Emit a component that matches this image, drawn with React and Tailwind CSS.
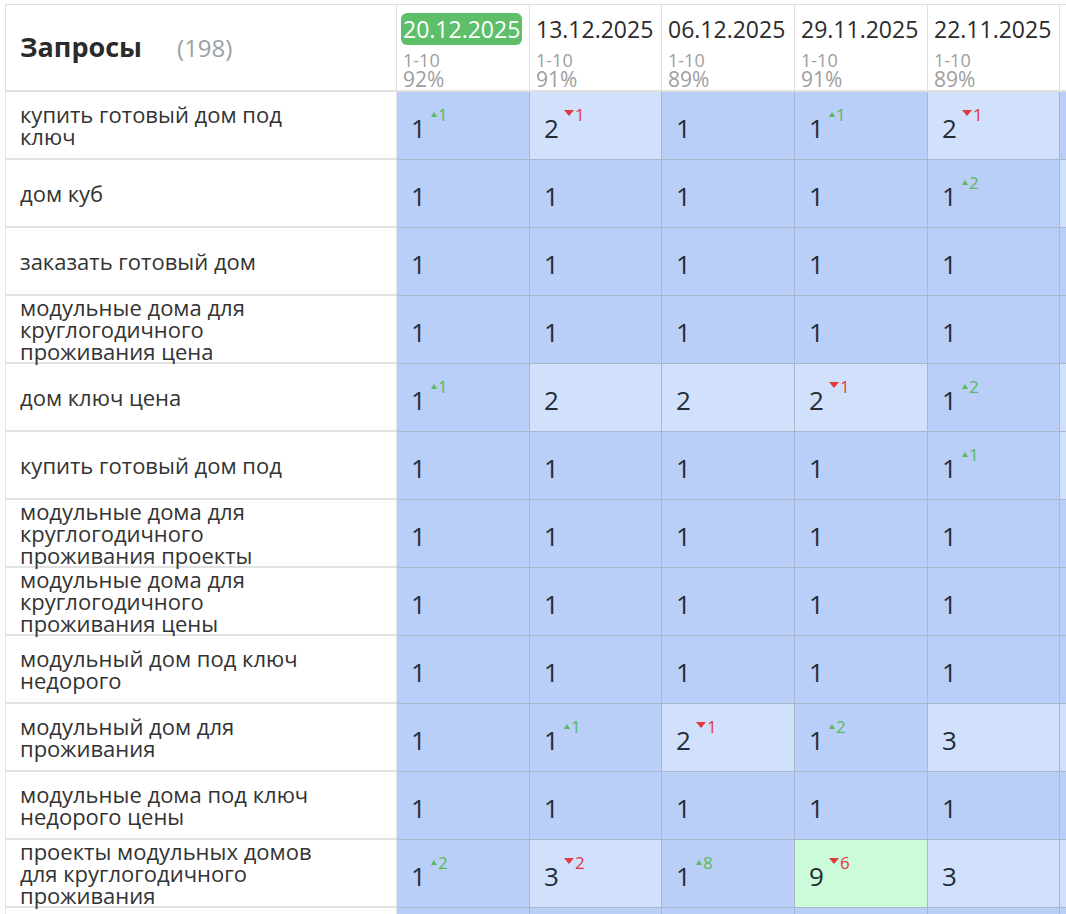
import React from "react";

const dates = [
  { d: "20.12.2025", r: "1-10", p: "92%", active: true },
  { d: "13.12.2025", r: "1-10", p: "91%" },
  { d: "06.12.2025", r: "1-10", p: "89%" },
  { d: "29.11.2025", r: "1-10", p: "91%" },
  { d: "22.11.2025", r: "1-10", p: "89%" },
];

const colW = ["w-[133px]", "w-[132px]", "w-[133px]", "w-[133px]", "w-[132px]", "w-[133px]"];

// [value, bg: d=dark, l=light, g=green, change]; x is the cut-off column's colour
const rows = [
  { q: "купить готовый дом под ключ", c: [["1", "d", 1], ["2", "l", -1], ["1", "d"], ["1", "d", 1], ["2", "l", -1]], x: "d" },
  { q: "дом куб", c: [["1", "d"], ["1", "d"], ["1", "d"], ["1", "d"], ["1", "d", 2]], x: "l" },
  { q: "заказать готовый дом", c: [["1", "d"], ["1", "d"], ["1", "d"], ["1", "d"], ["1", "d"]], x: "d" },
  { q: "модульные дома для круглогодичного проживания цена", c: [["1", "d"], ["1", "d"], ["1", "d"], ["1", "d"], ["1", "d"]], x: "d" },
  { q: "дом ключ цена", c: [["1", "d", 1], ["2", "l"], ["2", "l"], ["2", "l", -1], ["1", "d", 2]], x: "l" },
  { q: "купить готовый дом под", c: [["1", "d"], ["1", "d"], ["1", "d"], ["1", "d"], ["1", "d", 1]], x: "l" },
  { q: "модульные дома для круглогодичного проживания проекты", c: [["1", "d"], ["1", "d"], ["1", "d"], ["1", "d"], ["1", "d"]], x: "d" },
  { q: "модульные дома для круглогодичного проживания цены", c: [["1", "d"], ["1", "d"], ["1", "d"], ["1", "d"], ["1", "d"]], x: "d" },
  { q: "модульный дом под ключ недорого", c: [["1", "d"], ["1", "d"], ["1", "d"], ["1", "d"], ["1", "d"]], x: "d" },
  { q: "модульный дом для проживания", c: [["1", "d"], ["1", "d", 1], ["2", "l", -1], ["1", "d", 2], ["3", "l"]], x: "l" },
  { q: "модульные дома под ключ недорого цены", c: [["1", "d"], ["1", "d"], ["1", "d"], ["1", "d"], ["1", "d"]], x: "d" },
  { q: "проекты модульных домов для круглогодичного проживания", c: [["1", "d", 2], ["3", "l", -2], ["1", "d", 8], ["9", "g", -6], ["3", "l"]], x: "l" },
];

const bgMap = { d: "bg-[#b9cff8]", l: "bg-[#d2e1fb]", g: "bg-[#ccfbda]" };

function Change({ v }) {
  if (!v) return null;
  const up = v > 0;
  return (
    <span
      className={`ml-[5px] mt-[-5px] flex items-center text-[17px] leading-none ${
        up ? "text-[#5cb85c]" : "text-[#e0393e]"
      }`}
    >
      {up ? (
        <svg width="6" height="5" viewBox="0 0 6 5" className="mr-[1px] mt-[1px]">
          <polygon points="3,0 6,5 0,5" fill="currentColor" />
        </svg>
      ) : (
        <svg width="10" height="6" viewBox="0 0 10 6" className="mr-[1px] mt-[-2px]">
          <polygon points="0,0 10,0 5,6" fill="currentColor" />
        </svg>
      )}
      <span>{Math.abs(v)}</span>
    </span>
  );
}

export default function App() {
  return (
    <div
      className="w-[1066px] h-[914px] overflow-hidden bg-white pt-[4px] pl-[5px]"
      style={{ fontFamily: "'Open Sans', 'Noto Sans', sans-serif" }}
    >
      <div className="w-[1200px]">
        {/* header */}
        <div className="flex border-t border-[#e0e0e0]">
          <div className="w-[392px] h-[87px] shrink-0 border-l border-r border-b-2 border-[#e0e0e0] flex items-center pl-[14px]">
            <span className="text-[27px] font-bold text-[#2b2b2b]">Запросы</span>
            <span className="ml-[35px] text-[24px] text-[#9aa0a6]">(198)</span>
          </div>
          {dates.map((d, i) => (
            <div
              key={i}
              className={`${colW[i]} h-[87px] shrink-0 border-r border-b-2 border-[#e0e0e0] pl-[4px] pt-[8px]`}
            >
              <div className="h-[32px] flex items-center">
                <span
                  className={`text-[23px] leading-[32px] ${
                    d.active ? "bg-[#5dbf69] text-white rounded-[6px] px-[2px]" : "text-[#2b2b2b] px-[2px]"
                  }`}
                >
                  {d.d}
                </span>
              </div>
              <div className="mt-[6px] pl-[2px] text-[18px] leading-[18px] text-[#9e9e9e]">{d.r}</div>
              <div className="pl-[2px] text-[21px] leading-[20px] text-[#9e9e9e]">{d.p}</div>
            </div>
          ))}
          <div className={`${colW[5]} h-[87px] shrink-0 border-r border-b-2 border-[#e0e0e0]`} />
        </div>
        {/* rows */}
        {rows.map((r, ri) => (
          <div key={ri} className="flex">
            <div className="w-[392px] h-[68px] shrink-0 border-l border-r border-b-2 border-[#e2e2e2] flex items-center pl-[14px]">
              <div className="w-[300px] text-[22px] leading-[22px] text-[#333]">{r.q}</div>
            </div>
            {r.c.map((c, ci) => (
              <div
                key={ci}
                className={`${colW[ci]} h-[68px] shrink-0 border-r border-b border-[#a9b6cc] ${bgMap[c[1]]} flex items-center pl-[14px]`}
              >
                <div className="flex items-start">
                  <span className="text-[26px] leading-[26px] text-[#252c36] mt-[4px]">{c[0]}</span>
                  <Change v={c[2]} />
                </div>
              </div>
            ))}
            <div className={`${colW[5]} h-[68px] shrink-0 border-r border-b border-[#a9b6cc] ${bgMap[r.x]}`} />
          </div>
        ))}
        {/* next row, cut off by the viewport */}
        <div className="flex">
          <div className="w-[392px] h-[68px] shrink-0 border-l border-r border-[#e2e2e2]" />
          {colW.map((w, i) => (
            <div key={i} className={`${w} h-[68px] shrink-0 border-r border-[#a9b6cc] bg-[#b9cff8]`} />
          ))}
        </div>
      </div>
    </div>
  );
}
